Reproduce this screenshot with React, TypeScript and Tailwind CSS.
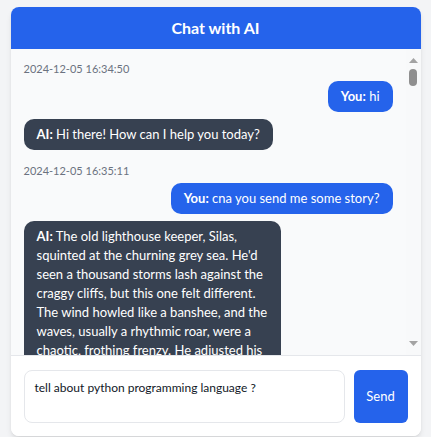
import React from "react";

type Msg = { from: "you" | "ai"; text: string };
type Group = { time: string; messages: Msg[] };

const chat: Group[] = [
  {
    time: "2024-12-05 16:34:50",
    messages: [
      { from: "you", text: "hi" },
      { from: "ai", text: "Hi there! How can I help you today?" },
    ],
  },
  {
    time: "2024-12-05 16:35:11",
    messages: [
      { from: "you", text: "cna you send me some story?" },
      {
        from: "ai",
        text: "The old lighthouse keeper, Silas, squinted at the churning grey sea. He'd seen a thousand storms lash against the craggy cliffs, but this one felt different. The wind howled like a banshee, and the waves, usually a rhythmic roar, were a chaotic, frothing frenzy. He adjusted his spectacles and climbed the winding stairs, lantern in hand, to check the great lamp one more time before the night swallowed the coast.",
      },
    ],
  },
];

const Bubble = ({ msg }: { msg: Msg }) => {
  const isYou = msg.from === "you";
  return (
    <div className={`flex ${isYou ? "justify-end" : "justify-start"}`}>
      <div
        className={`max-w-[257px] rounded-[10px] px-[13px] py-[6px] text-[13px] leading-[19px] text-white ${
          isYou ? "bg-[#2563eb]" : "bg-[#374151]"
        }`}
      >
        <span className="font-bold">{isYou ? "You:" : "AI:"}</span> {msg.text}
      </div>
    </div>
  );
};

// drawn scrollbar, like the browser's classic one
const ScrollBar = () => (
  <div className="w-[15px] shrink-0 bg-[#f8f9fa] flex flex-col items-center justify-between pt-[9px] pb-[9px]">
    <div className="flex flex-col items-center gap-[6px]">
      <svg width="9" height="5" viewBox="0 0 9 5">
        <path d="M4.5 0 L9 5 L0 5 Z" fill="#a3a3a3" />
      </svg>
      <div className="w-[8px] h-[17px] rounded-full bg-[#8f8f8f]" />
    </div>
    <svg width="9" height="5" viewBox="0 0 9 5">
      <path d="M0 0 L9 0 L4.5 5 Z" fill="#a3a3a3" />
    </svg>
  </div>
);

export default function App() {
  return (
    <div
      className="min-h-screen bg-[#f3f4f6] flex justify-center pt-[7px]"
      style={{ fontFamily: "Lato, 'Liberation Sans', sans-serif" }}
    >
      <div className="w-[410px] h-[429px] bg-white rounded-lg shadow-md flex flex-col overflow-hidden">
        <div className="h-[42px] shrink-0 bg-[#2563eb] flex items-center justify-center text-white text-[16px] font-bold">
          Chat with AI
        </div>

        <div className="flex-1 min-h-0 flex bg-[#f9fafb]">
          <div className="flex-1 overflow-hidden px-[13px] pt-[12px]">
            {chat.map((group, gi) => (
              <div key={gi} className={gi > 0 ? "mt-[13px]" : ""}>
                <p className="text-[11px] leading-[16px] text-[#6b7280] mb-[4px]">
                  {group.time}
                </p>
                <div className="flex flex-col gap-[7px]">
                  {group.messages.map((m, mi) => (
                    <Bubble key={mi} msg={m} />
                  ))}
                </div>
              </div>
            ))}
          </div>
          <ScrollBar />
        </div>

        <div className="shrink-0 border-t border-[#e5e7eb] bg-white flex gap-[9px] px-[13px] pt-[14px] pb-[13px]">
          <textarea
            className="flex-1 h-[53px] resize-none rounded-lg border border-[#e5e7eb] px-[10px] py-[9px] text-[12px] leading-[16px] text-[#111827] outline-none"
            defaultValue="tell about python programming language ?"
          />
          <button className="w-[54px] h-[53px] rounded-md bg-[#2563eb] text-white text-[13px]">
            Send
          </button>
        </div>
      </div>
    </div>
  );
}
